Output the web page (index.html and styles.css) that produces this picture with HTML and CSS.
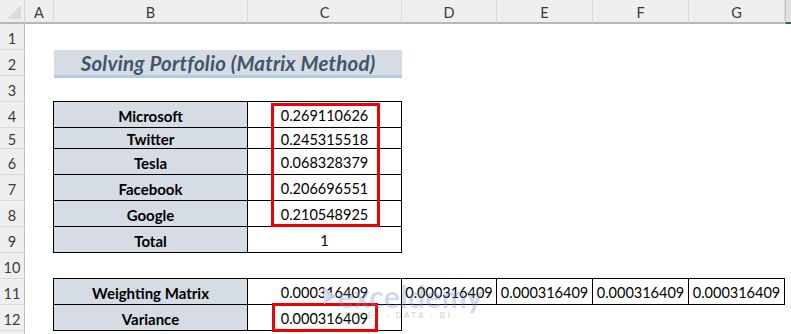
FILE: index.html
```html
<!DOCTYPE html>
<html lang="en">
<head>
    <meta charset="UTF-8">
    <title>Solving Portfolio (Matrix Method)</title>
    <link rel="stylesheet" href="styles.css">
</head>
<body>
    <div class="sheet">
        <!-- column headers -->
        <div class="corner"><span class="tri"></span></div>
        <div class="col-head">A</div>
        <div class="col-head">B</div>
        <div class="col-head">C</div>
        <div class="col-head">D</div>
        <div class="col-head">E</div>
        <div class="col-head">F</div>
        <div class="col-head">G</div>
        <div class="col-head next"></div>

        <!-- row headers -->
        <div class="row-head" style="grid-row: 2">1</div>
        <div class="row-head" style="grid-row: 3">2</div>
        <div class="row-head" style="grid-row: 4">3</div>
        <div class="row-head" style="grid-row: 5">4</div>
        <div class="row-head" style="grid-row: 6">5</div>
        <div class="row-head" style="grid-row: 7">6</div>
        <div class="row-head" style="grid-row: 8">7</div>
        <div class="row-head" style="grid-row: 9">8</div>
        <div class="row-head" style="grid-row: 10">9</div>
        <div class="row-head" style="grid-row: 11">10</div>
        <div class="row-head" style="grid-row: 12">11</div>
        <div class="row-head" style="grid-row: 13">12</div>
        <div class="row-head" style="grid-row: 14"></div>

        <div class="title">Solving Portfolio (Matrix Method)</div>

        <div class="cell label" style="grid-row: 5">Microsoft</div>
        <div class="cell num" style="grid-row: 5">0.269110626</div>
        <div class="cell label" style="grid-row: 6">Twitter</div>
        <div class="cell num" style="grid-row: 6">0.245315518</div>
        <div class="cell label" style="grid-row: 7">Tesla</div>
        <div class="cell num" style="grid-row: 7">0.068328379</div>
        <div class="cell label" style="grid-row: 8">Facebook</div>
        <div class="cell num" style="grid-row: 8">0.206696551</div>
        <div class="cell label" style="grid-row: 9">Google</div>
        <div class="cell num" style="grid-row: 9">0.210548925</div>
        <div class="cell label" style="grid-row: 10">Total</div>
        <div class="cell num" style="grid-row: 10">1</div>

        <div class="cell label" style="grid-row: 12">Weighting Matrix</div>
        <div class="cell num" style="grid-row: 12">0.000316409</div>
        <div class="cell num col-d" style="grid-row: 12">0.000316409</div>
        <div class="cell num col-e" style="grid-row: 12">0.000316409</div>
        <div class="cell num col-f" style="grid-row: 12">0.000316409</div>
        <div class="cell num col-g" style="grid-row: 12">0.000316409</div>
        <div class="cell label" style="grid-row: 13">Variance</div>
        <div class="cell num" style="grid-row: 13">0.000316409</div>

        <div class="highlight weights"></div>
        <div class="highlight variance"></div>

        <div class="watermark">
            <div class="wm-logo">
                <svg width="14" height="18" viewBox="0 0 14 18">
                    <path d="M1 1 L13 9 L1 17 Z" fill="#c2cdea"/>
                    <path d="M1 1 L7 9 L1 17 Z" fill="#d6def2"/>
                </svg>
                <span>exceldemy</span>
            </div>
            <div class="wm-tag">EXCEL · DATA · BI</div>
        </div>
    </div>
</body>
</html>
```

FILE: styles.css
```css
body {
    margin: 0;
    background: #fff;
    font-family: Lato, "Open Sans", sans-serif;
    color: #000;
    overflow: hidden;
}
.sheet {
    display: grid;
    grid-template-columns: 25px 29px 194px 154px 95px 96px 96px 96px 6px;
    grid-template-rows: 24px 26px 26px 26px 26px 21px 26px 26px 26px 26px 26px 26px 26px 3px;
    width: 791px;
    height: 334px;
    position: relative;
}
.corner {
    grid-row: 1;
    grid-column: 1;
    background: #efefef;
    border-bottom: 2px solid #b7b7b7;
    border-right: 1px solid #d6d6d6;
    position: relative;
}
.tri {
    position: absolute;
    right: 3px;
    bottom: 3px;
    width: 0;
    height: 0;
    border-left: 14px solid transparent;
    border-bottom: 14px solid #dcdcdc;
}
.col-head {
    grid-row: 1;
    background: #efefef;
    border-bottom: 2px solid #b7b7b7;
    border-right: 1px solid #dadada;
    display: flex;
    align-items: center;
    justify-content: center;
    font-size: 14.5px;
    color: #3b3b3b;
    padding-top: 2px;
}
.col-head.next {
    background: #e1e1e1;
    border-left: 1px solid #c4c4c4;
    border-right: none;
    border-bottom: 2px solid #217346;
}
.row-head {
    grid-column: 1;
    background: #efefef;
    border-right: 1px solid #bdbdbd;
    border-bottom: 1px solid #dadada;
    display: flex;
    align-items: center;
    justify-content: center;
    font-size: 14.5px;
    color: #3b3b3b;
    padding-top: 3px;
}
.title {
    grid-row: 3;
    grid-column: 3 / 5;
    align-self: start;
    height: 25px;
    background: #d6dce4;
    border-bottom: 3px solid #aecbe8;
    color: #44546a;
    font-size: 20.5px;
    font-weight: bold;
    font-style: italic;
    display: flex;
    align-items: center;
    justify-content: center;
    letter-spacing: 0.2px;
}
.cell {
    border: 1px solid #000;
    margin: -1px 0 0 -1px;
    display: flex;
    align-items: center;
    justify-content: center;
    font-size: 14.5px;
    padding-top: 2px;
}
.label {
    grid-column: 3;
    background: #d6dce4;
    font-weight: bold;
    font-size: 15px;
}
.num {
    grid-column: 4;
    background: #fff;
}
.col-d { grid-column: 5; }
.col-e { grid-column: 6; }
.col-f { grid-column: 7; }
.col-g { grid-column: 8; }
.highlight {
    grid-column: 4;
    justify-self: center;
    border: 3px solid #f00000;
    box-sizing: border-box;
    z-index: 2;
}
.highlight.weights {
    grid-row: 5 / 10;
    width: 109px;
    margin-top: 1px;
}
.highlight.variance {
    grid-row: 13;
    width: 106px;
    margin: -2px 0 -1px 0;
}
.watermark {
    grid-row: 12 / 14;
    grid-column: 4 / 6;
    margin-left: 75px;
    padding-top: 4px;
    z-index: 3;
    pointer-events: none;
}
.wm-logo {
    display: flex;
    align-items: center;
    gap: 1px;
    color: rgba(110, 135, 205, 0.33);
    font-size: 30px;
    font-weight: bold;
    line-height: 26px;
    letter-spacing: 0.3px;
}
.wm-tag {
    margin-left: 22px;
    font-size: 8px;
    letter-spacing: 2.6px;
    color: rgba(120, 120, 120, 0.4);
    margin-top: 1px;
}
```
